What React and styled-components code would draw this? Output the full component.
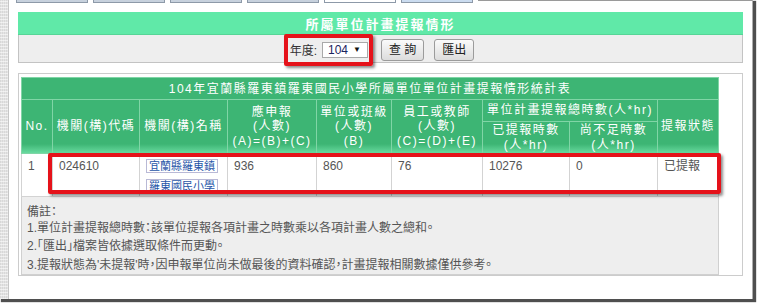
import React from "react";
import styled, { createGlobalStyle } from "styled-components";

const GlobalStyle = createGlobalStyle`
  html, body { margin: 0; padding: 0; background: #ffffff; }
  body {
    font-family: "Liberation Sans", "Noto Sans CJK TC", sans-serif;
  }
`;

const Viewport = styled.div`
  width: 758px;
  height: 303px;
  overflow: hidden;
  background: #ffffff;
`;

/* captured window with its drop shadow */
const Shot = styled.div`
  position: relative;
  display: flex;
  width: 753px;
  height: 299px;
  box-shadow: 2px 2px 1px 1px #4f4f4f;
`;

const Backdrop = styled.div`
  width: 8px;
  flex: none;
  background-color: #e4e4e4;
  background-image:
    repeating-linear-gradient(0deg, rgba(255, 255, 255, 0.55) 0 1px, transparent 1px 3px),
    repeating-linear-gradient(90deg, rgba(0, 0, 0, 0.05) 0 1px, transparent 1px 2px);
`;

const Page = styled.div`
  flex: 1;
  min-width: 0;
  display: flex;
  flex-direction: column;
  background: #ffffff;
  border-left: 1px solid #c6c6c6;
  border-right: 1px solid #adadad;
  padding: 0 9px;
`;

const TabStrip = styled.div`
  display: flex;
  align-items: flex-start;
  gap: 5px;
  height: 3px;
  margin: 0 -9px 0 -2px;
`;

const tabColors = {
  idle: "#c7d1dd",
  active: "#ffffff",
  light: "#cbdcf0",
};

const Tab = styled.div`
  flex: none;
  width: 72px;
  height: 3px;
  box-sizing: border-box;
  border: 1px solid #8d99a8;
  border-top: none;
  background: ${(p) => tabColors[p.$tone]};
`;

const TabRule = styled.div`
  flex: 1;
  border-top: 1px solid #9a9a9a;
`;

const TitleBar = styled.div`
  margin-top: 9px;
  height: 22px;
  border-bottom: 1px solid #56d596;
  background: #60e9a8;
  color: #ffffff;
  font-size: 13px;
  font-weight: bold;
  letter-spacing: 2px;
  display: flex;
  align-items: center;
  justify-content: center;
`;

const Toolbar = styled.div`
  height: 25px;
  padding: 2px 0 0 3px;
  border: 1px solid #c3c3c3;
  border-top: none;
  background: #eeeeee;
  display: flex;
  align-items: center;
  justify-content: center;
  font-size: 12px;
  color: #333333;
`;

const Label = styled.span`
  margin-right: 5px;
`;

const YearSelect = styled.div`
  width: 46px;
  height: 16px;
  box-sizing: border-box;
  border: 1px solid #a9a9a9;
  background: #ffffff;
  display: flex;
  align-items: center;
  justify-content: space-between;
  padding: 0 6px 0 5px;
  color: #1b2460;
  font-size: 12px;
`;

const Caret = styled.span`
  font-size: 8px;
  color: #111111;
`;

const Button = styled.button`
  height: 22px;
  margin-left: ${(p) => p.$gap}px;
  padding: 0 7px;
  border: 1px solid #9b9b9b;
  border-radius: 3px;
  background: linear-gradient(#fafafa, #dcdcdc);
  font-family: inherit;
  font-size: 12px;
  color: #222222;
  line-height: 20px;
`;

const Report = styled.div`
  margin-top: 10px;
  border: 1px solid #cccccc;
  padding: 3px 0 0 2px;
  background: #ffffff;
`;

const Grid = styled.table`
  width: 697px;
  table-layout: fixed;
  border-collapse: collapse;
  font-size: 12px;
`;

const Col = styled.col`
  width: ${(p) => p.$w}px;
`;

const green = "#3db574";
const headLine = "#80d5a6";

const CaptionCell = styled.th`
  height: 21px;
  padding: 0;
  background: ${green};
  border: 1px solid ${headLine};
  color: #ffffff;
  font-weight: normal;
  letter-spacing: 1.5px;
  line-height: 14px;
`;

const HeadRow = styled.tr`
  height: ${(p) => p.$h}px;
`;

const Head = styled.th`
  padding: 0 1px;
  border: 1px solid ${headLine};
  color: #ffffff;
  font-weight: normal;
  letter-spacing: 1.5px;
  line-height: 14.5px;
  white-space: nowrap;
  background: ${(p) =>
    p.$flat
      ? green
      : `${green} linear-gradient(to bottom, ${green}, #68da9f) no-repeat left bottom / 100% 9px`};
`;

const DataRow = styled.tr`
  height: 42px;
`;

const Cell = styled.td`
  padding: 2px 2px 0 6px;
  vertical-align: top;
  line-height: 20px;
  color: #555555;
  border: 1px solid #d3d3d3;
  border-top: none;
  overflow: hidden;
`;

const NameLink = styled.span`
  color: #1f56a8;
  font-size: 11px;
  border: 1px solid #b9b9d6;
  padding: 0 2px;
  -webkit-box-decoration-break: clone;
  box-decoration-break: clone;
`;

const NotesCell = styled.td`
  padding: 9px 6px 0 5px;
  vertical-align: top;
  background: #eeeeee;
  border: 1px solid #d0d0d0;
  color: #555555;
  font-feature-settings: "halt";
`;

const NoteHead = styled.div`
  line-height: 12.5px;
`;

const NoteLine = styled.div`
  line-height: 18.5px;
  white-space: nowrap;
`;

/* red highlight frames drawn over the page */
const Callout = styled.div`
  position: absolute;
  left: ${(p) => p.$x}px;
  top: ${(p) => p.$y}px;
  width: ${(p) => p.$w}px;
  height: ${(p) => p.$h}px;
  box-sizing: border-box;
  border: 4px solid #e5121a;
  border-radius: 2px;
  box-shadow: 2px 2px 3px rgba(0, 0, 0, 0.45);
  pointer-events: none;
`;

const widths = [31, 87, 88, 89, 75, 91, 87, 88, 61];

const rows = [
  {
    no: "1",
    code: "024610",
    name: "宜蘭縣羅東鎮羅東國民小學",
    due: "936",
    unit: "860",
    staff: "76",
    done: "10276",
    short: "0",
    status: "已提報",
  },
];

const notes = [
  "1.單位計畫提報總時數：該單位提報各項計畫之時數乘以各項計畫人數之總和。",
  "2.「匯出」檔案皆依據選取條件而更動。",
  "3.提報狀態為'未提報'時，因申報單位尚未做最後的資料確認，計畫提報相關數據僅供參考。",
];

export default function App() {
  return (
    <Viewport>
      <GlobalStyle />
      <Shot>
        <Backdrop />
        <Page>
          <TabStrip>
            <Tab $tone="idle" />
            <Tab $tone="idle" />
            <Tab $tone="idle" />
            <Tab $tone="idle" />
            <Tab $tone="active" />
            <Tab $tone="light" />
            <TabRule />
          </TabStrip>

          <TitleBar>所屬單位計畫提報情形</TitleBar>

          <Toolbar>
            <Label>年度:</Label>
            <YearSelect>
              <span>104</span>
              <Caret>▼</Caret>
            </YearSelect>
            <Button $gap={13}>查 詢</Button>
            <Button $gap={10}>匯出</Button>
          </Toolbar>

          <Report>
            <Grid>
              <colgroup>
                {widths.map((w, i) => (
                  <Col key={i} $w={w} />
                ))}
              </colgroup>
              <thead>
                <tr>
                  <CaptionCell colSpan={9}>
                    104年宜蘭縣羅東鎮羅東國民小學所屬單位單位計畫提報情形統計表
                  </CaptionCell>
                </tr>
                <HeadRow $h={22}>
                  <Head rowSpan={2}>No.</Head>
                  <Head rowSpan={2}>機關(構)代碼</Head>
                  <Head rowSpan={2}>機關(構)名稱</Head>
                  <Head rowSpan={2}>
                    應申報
                    <br />
                    (人數)
                    <br />
                    (A)=(B)+(C)
                  </Head>
                  <Head rowSpan={2}>
                    單位或班級
                    <br />
                    (人數)
                    <br />
                    (B)
                  </Head>
                  <Head rowSpan={2}>
                    員工或教師
                    <br />
                    (人數)
                    <br />
                    (C)=(D)+(E)
                  </Head>
                  <Head colSpan={2} $flat>
                    單位計畫提報總時數(人*hr)
                  </Head>
                  <Head rowSpan={2}>提報狀態</Head>
                </HeadRow>
                <HeadRow $h={32}>
                  <Head>
                    已提報時數
                    <br />
                    (人*hr)
                  </Head>
                  <Head>
                    尚不足時數
                    <br />
                    (人*hr)
                  </Head>
                </HeadRow>
              </thead>
              <tbody>
                {rows.map((r) => (
                  <DataRow key={r.no}>
                    <Cell>{r.no}</Cell>
                    <Cell>{r.code}</Cell>
                    <Cell>
                      <NameLink>{r.name}</NameLink>
                    </Cell>
                    <Cell>{r.due}</Cell>
                    <Cell>{r.unit}</Cell>
                    <Cell>{r.staff}</Cell>
                    <Cell>{r.done}</Cell>
                    <Cell>{r.short}</Cell>
                    <Cell>{r.status}</Cell>
                  </DataRow>
                ))}
                <tr>
                  <NotesCell colSpan={9}>
                    <NoteHead>備註：</NoteHead>
                    {notes.map((n) => (
                      <NoteLine key={n}>{n}</NoteLine>
                    ))}
                  </NotesCell>
                </tr>
              </tbody>
            </Grid>
          </Report>
        </Page>

        <Callout $x={284} $y={34} $w={89} $h={32} />
        <Callout $x={48} $y={153} $w={673} $h={41} />
      </Shot>
    </Viewport>
  );
}
